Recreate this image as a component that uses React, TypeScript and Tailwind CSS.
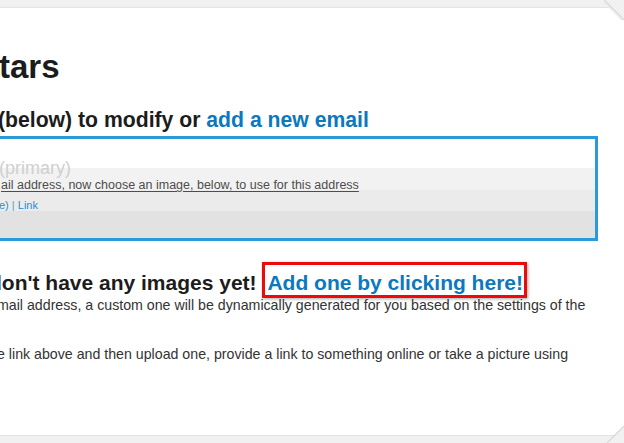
import React from "react";

export default function App() {
  return (
    <div
      className="relative w-[624px] h-[443px] overflow-hidden bg-[#f1f1f1] text-[#222]"
      style={{ fontFamily: '"Liberation Sans", Arial, sans-serif' }}
    >
      <div className="h-[8px] border-b border-[#e4e4e4] bg-[#f1f1f1]" />
      <div className="h-[428px] bg-white border-b border-[#e2e2e2]">
        <h1 className="ml-[-1px] pt-[41px] text-[33px] leading-[36px] font-bold text-[#1c1c1c]">tars</h1>
        <h2 className="ml-[-2px] mt-[23px] text-[21.2px] leading-[24px] font-bold text-[#1c1c1c]">
          (below) to modify or <a className="text-[#0c78bd]">add a new email</a>
        </h2>
        <div className="ml-[-10px] mr-[26px] mt-[4px] h-[105px] border-[3px] border-[#2a9ad8] bg-[linear-gradient(to_bottom,#ffffff_0px,#ffffff_29px,#f2f2f2_29px,#f2f2f2_51px,#ebebeb_51px,#ebebeb_72px,#e2e2e2_72px)] pl-[8px]">
          <div className="ml-[-2px] mt-[21px] text-[18px] leading-[16px] text-[#cfcfcf]">(primary)</div>
          <div className="mt-[2px] text-[12.5px] leading-[15px] text-[#4d4d4d]">
            <span className="underline underline-offset-[2px]">ail address, now choose an image, below, to use for this address</span>
          </div>
          <div className="ml-[-2px] mt-[6px] text-[11px] leading-[13px] text-[#2a8fd2]">
            e) <span className="text-[#6a9ec4]">|</span> Link
          </div>
        </div>
        <h2 className="ml-[-11px] mt-[30px] text-[21px] leading-[24px] font-bold text-[#1c1c1c]">
          don't have any images yet!{" "}
          <a className="inline-block mt-[-9px] mb-[-3px] border-[3px] border-[#ec0a0a] pt-[6px] pl-[2px] pr-[1px] text-[#0c78bd] shadow-[1px_1px_3px_rgba(0,0,0,0.35)]">
            Add one by clicking here!
          </a>
        </h2>
        <p className="ml-[-3px] mt-[1px] text-[14.2px] leading-[18px] text-[#333]">
          mail address, a custom one will be dynamically generated for you based on the settings of the
        </p>
        <p className="ml-[-3px] mt-[31px] text-[14.2px] leading-[18px] text-[#333]">
          e link above and then upload one, provide a link to something online or take a picture using
        </p>
      </div>
      <svg className="absolute top-0 right-0" width="20" height="20" viewBox="0 0 20 20">
        <polygon points="0,0 20,0 20,20" fill="#f1f1f1" />
        <line x1="0" y1="0" x2="20" y2="20" stroke="#d4d4d4" strokeWidth="1.2" />
        <line x1="-1" y1="1" x2="19" y2="21" stroke="#ececec" strokeWidth="1.5" />
      </svg>
      <svg className="absolute bottom-0 right-0" width="17" height="17" viewBox="0 0 17 17">
        <polygon points="17,0 17,17 0,17" fill="#f1f1f1" />
        <line x1="17" y1="0" x2="0" y2="17" stroke="#d4d4d4" strokeWidth="1.2" />
      </svg>
    </div>
  );
}
